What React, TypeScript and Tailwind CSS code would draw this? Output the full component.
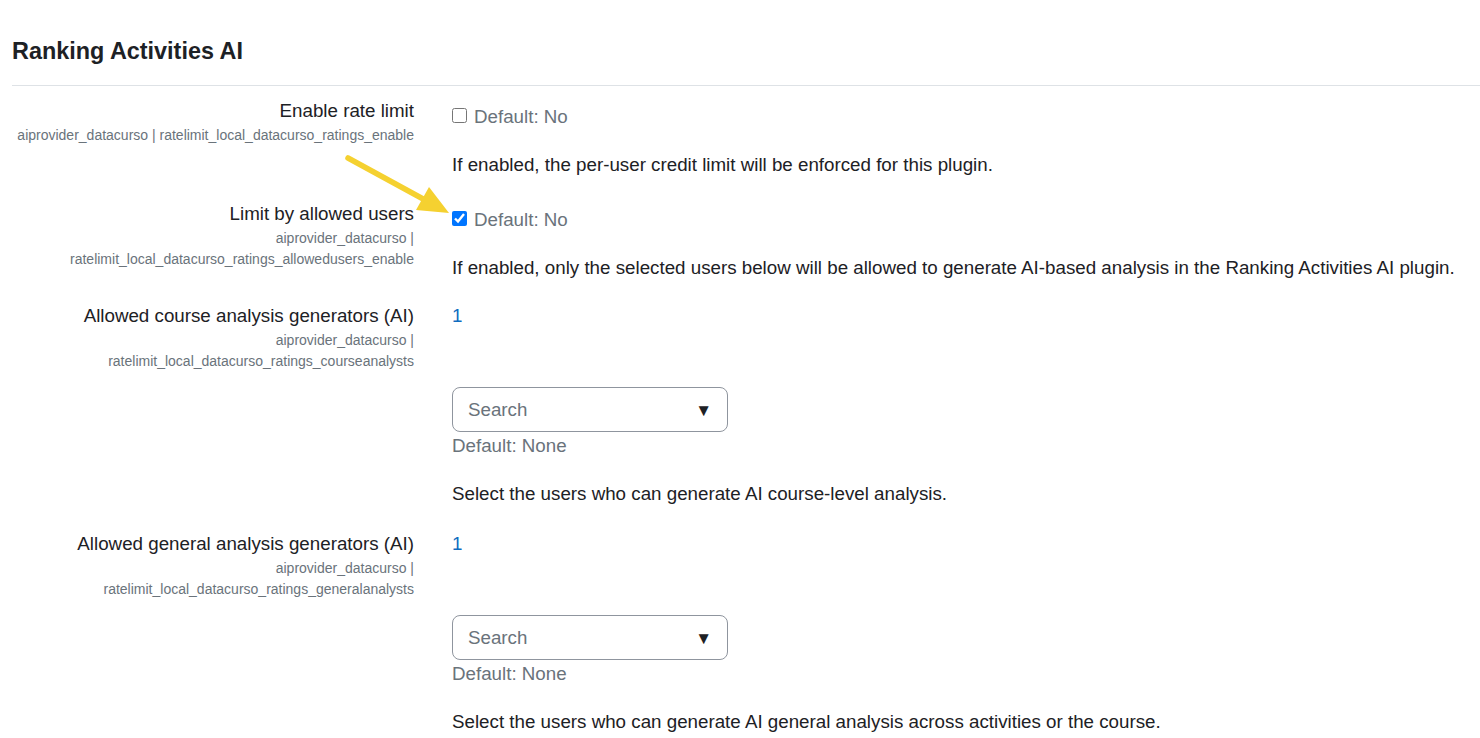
import React from 'react';

interface SettingProps {
  label: string;
  id: string;
  children: React.ReactNode;
  className?: string;
}

function Setting({ label, id, children, className = '' }: SettingProps) {
  return (
    <div className={`flex ${className}`}>
      <div className="w-[414px] shrink-0 text-right">
        <div className="text-[18.75px] leading-[28px] text-[#1d2125]">{label}</div>
        <div className="text-[14px] leading-[21px] text-[#6a737b] break-words">{id}</div>
      </div>
      <div className="ml-[38px] flex-1">{children}</div>
    </div>
  );
}

function Checkbox({ checked }: { checked: boolean }) {
  return (
    <div className="flex items-center pt-[6px] leading-[28px]">
      <input
        type="checkbox"
        defaultChecked={checked}
        className="m-0 h-[15px] w-[15px] -translate-y-[2px]"
      />
      <span className="ml-[7px] text-[18.75px] text-[#6a737b]">Default: No</span>
    </div>
  );
}

function UserSelect() {
  return (
    <>
      <div className="text-[18.75px] leading-[28px] text-[#0f6cbf]">1</div>
      <div className="mt-[57px] flex h-[45px] w-[276px] items-center justify-between rounded-[8px] border border-[#8f959e] pl-[15px] pr-[15px] pt-[2px]">
        <span className="text-[18.75px] text-[#6a737b]">Search</span>
        <span className="text-[17px] text-[#1d2125]">▼</span>
      </div>
      <div className="text-[18.75px] leading-[28px] text-[#6a737b]">Default: None</div>
    </>
  );
}

function Description({ children }: { children: React.ReactNode }) {
  return <div className="mt-[20px] text-[18.75px] leading-[28px] text-[#1d2125]">{children}</div>;
}

export default function App() {
  return (
    <div
      className="relative h-[738px] w-[1480px] overflow-hidden bg-white"
      style={{ fontFamily: '"Liberation Sans", Arial, sans-serif' }}
    >
      <div className="pl-[12px]">
        <h3 className="pt-[37px] text-[23.4px] font-bold leading-[28px] text-[#1d2125]">Ranking Activities AI</h3>
        <div className="mt-[20px] border-t border-[#dee2e6]" />
      </div>

      <Setting
        className="mt-[11px]"
        label="Enable rate limit"
        id="aiprovider_datacurso | ratelimit_local_datacurso_ratings_enable"
      >
        <Checkbox checked={false} />
        <Description>If enabled, the per-user credit limit will be enforced for this plugin.</Description>
      </Setting>

      <Setting
        className="mt-[21px]"
        label="Limit by allowed users"
        id="aiprovider_datacurso | ratelimit_local_datacurso_ratings_allowedusers_enable"
      >
        <Checkbox checked={true} />
        <Description>
          If enabled, only the selected users below will be allowed to generate AI-based analysis in the Ranking
          Activities AI plugin.
        </Description>
      </Setting>

      <Setting
        className="mt-[20px]"
        label="Allowed course analysis generators (AI)"
        id="aiprovider_datacurso | ratelimit_local_datacurso_ratings_courseanalysts"
      >
        <UserSelect />
        <Description>Select the users who can generate AI course-level analysis.</Description>
      </Setting>

      <Setting
        className="mt-[22px]"
        label="Allowed general analysis generators (AI)"
        id="aiprovider_datacurso | ratelimit_local_datacurso_ratings_generalanalysts"
      >
        <UserSelect />
        <Description>Select the users who can generate AI general analysis across activities or the course.</Description>
      </Setting>

      {/* annotation arrow */}
      <svg className="pointer-events-none absolute left-0 top-0" width="1480" height="738">
        <line x1="348" y1="158" x2="425" y2="200" stroke="#f5d130" strokeWidth="5.5" strokeLinecap="round" />
        <polygon points="449,213 429,187 416,210" fill="#f5d130" />
      </svg>
    </div>
  );
}
